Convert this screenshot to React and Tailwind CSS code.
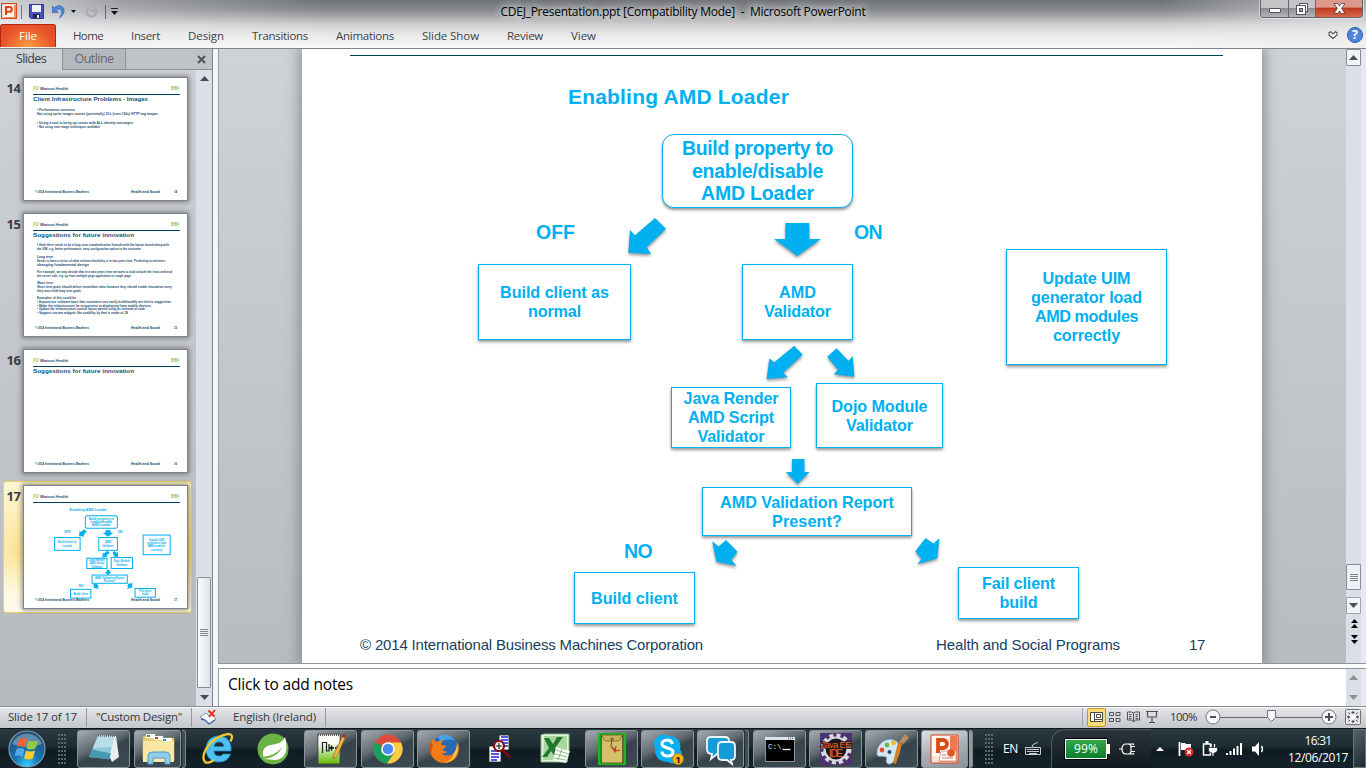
import React, { useLayoutEffect, useRef } from "react";

const BLUE = "#00b0f0";

/* Text run whose letter spacing is adjusted so that it fills w pixels. */
function Fit({ w, className = "", children }) {
  const ref = useRef(null);
  useLayoutEffect(() => {
    const el = ref.current;
    el.style.letterSpacing = "0px";
    const nat = el.getBoundingClientRect().width;
    const n = el.textContent.length;
    el.style.letterSpacing = (w - nat) / n + "px";
  }, [w]);
  return (
    <span ref={ref} className={"inline-block whitespace-nowrap " + className}>
      {children}
    </span>
  );
}

const ARROWS = [
  "655,218 666,228.7 646.7,247.3 651.3,254 628.3,252.7 630,230 635,235.3",
  "785.3,223 809.3,223 809.3,239 821,239 797.3,256 774,239 785.3,239",
  "794.2,345.7 802.8,354.7 783.2,372.7 788,377.3 766.6,379 769.4,358.3 774.2,362.3",
  "836.5,348.3 848.6,360.7 852.7,356 854.4,376.7 833.8,374.3 837.9,369.7 827.2,356.7",
  "792,459 804.4,459 804.4,472 809.6,472 797.6,484 785.8,472 792,472",
  "712.2,541.3 718.5,546.5 726,540 737.6,551.7 731.4,560 736.6,566 716.3,561.7",
  "925.6,538 933.5,543.5 939.4,538.3 937.3,558.3 917.3,564.3 921.5,559 915.3,551.3",
];

const NODES = [
  { x: 662, y: 134, w: 191, h: 75, r: 12, big: true, lines: [["Build property to", 151], ["enable/disable", 131], ["AMD Loader", 113]], pos: "left-[360px] top-[85px] w-[191px] h-[74px] rounded-[12px]" },
  { x: 478, y: 264, w: 153, h: 76, lines: [["Build client as", 109], ["normal", 53]], pos: "left-[176px] top-[215px] w-[153px] h-[76px]" },
  { x: 742, y: 264, w: 111, h: 76, lines: [["AMD", 37], ["Validator", 67]], pos: "left-[440px] top-[215px] w-[111px] h-[76px]" },
  { x: 1006, y: 249, w: 161, h: 117, lines: [["Update UIM", 88], ["generator load", 111], ["AMD modules", 103], ["correctly", 67]], pos: "left-[704px] top-[200px] w-[161px] h-[116px]" },
  { x: 671, y: 387, w: 120, h: 61, lines: [["Java Render", 95], ["AMD Script", 86], ["Validator", 67]], pos: "left-[369px] top-[338px] w-[120px] h-[61px]" },
  { x: 816, y: 383, w: 127, h: 65, lines: [["Dojo Module", 96], ["Validator", 67]], pos: "left-[514px] top-[334px] w-[127px] h-[65px]" },
  { x: 702, y: 487, w: 210, h: 49, lines: [["AMD Validation Report", 174], ["Present?", 70]], pos: "left-[400px] top-[438px] w-[210px] h-[49px]" },
  { x: 574, y: 572, w: 121, h: 52, lines: [["Build client", 87]], pos: "left-[272px] top-[523px] w-[121px] h-[52px]" },
  { x: 958, y: 567, w: 121, h: 52, lines: [["Fail client", 73], ["build", 38]], pos: "left-[656px] top-[518px] w-[121px] h-[52px]" },
];

function Slide() {
  return (
    <div className="relative h-[614px] w-[960px] shrink-0 overflow-hidden bg-white font-['Liberation_Sans',sans-serif] font-bold text-[#00b0f0] shadow-[0_0_12px_3px_rgba(90,95,102,0.55)]">
      <div className="absolute left-[48px] top-[6px] h-px w-[873px] bg-[#00405c]" />
      <div className="absolute left-[266px] top-[36px] text-[21px] leading-[24px]"><Fit w={221}>Enabling AMD Loader</Fit></div>
      <svg className="absolute left-0 top-0 h-[614px] w-[960px] drop-shadow-[0_2px_1.5px_rgba(0,0,0,0.4)]" viewBox="302 49 960 614">
        {ARROWS.map((p) => <polygon key={p} points={p} fill={BLUE} />)}
      </svg>
      {NODES.map((n) => (
        <div key={n.x + "-" + n.y} className={"absolute flex flex-col items-center justify-center border border-[#00b0f0] bg-white shadow-[0_2px_3px_rgba(0,0,0,0.42)] " + n.pos}>
          {n.lines.map(([t, w]) => (
            <div key={t} className={n.big ? "h-[22.5px] text-[19.5px] leading-[22.5px]" : "h-[19px] text-[16.2px] leading-[19px]"}>
              <Fit w={w}>{t}</Fit>
            </div>
          ))}
        </div>
      ))}
      <div className="absolute left-[234px] top-[172px] text-[19.5px] leading-[23px]"><Fit w={39}>OFF</Fit></div>
      <div className="absolute left-[552px] top-[172px] text-[19.5px] leading-[23px]"><Fit w={28}>ON</Fit></div>
      <div className="absolute left-[322px] top-[491px] text-[19.5px] leading-[23px]"><Fit w={28}>NO</Fit></div>
      <div className="absolute left-[58px] top-[587px] flex w-[845px] items-center text-[15px] font-normal leading-[18px] text-[#17405e]">
        <Fit w={343}>© 2014 International Business Machines Corporation</Fit>
        <Fit w={184} className="ml-[233px]">Health and Social Programs</Fit>
        <Fit w={16} className="ml-[69px]">17</Fit>
      </div>
    </div>
  );
}

const THUMB_TEXT = {
  14: { title: "Client Infrastructure Problems - Images", tw: 115, lines: [[14, 32, 38, "• Performance concerns"], [14, 36, 121, "Not using sprite images causes (potentially) 10's (even 100s) HTTP img images"], [14, 45, 96, "• Using a tool to bring up runner with ALL identity messages"], [14, 49, 63, "• Not using new image techniques available"]] },
  15: { title: "Suggestions for future innovation", tw: 101, lines: [
    [14, 31, 132, "I think there needs to be a long term standardisation formula with the layout based along with"], [14, 35, 104, "the UIM, e.g. better performance, easy configuration option to the customer"],
    [14, 43, 16, "Long term"], [14, 47, 128, "Needs to have a vision of what solution feasibility is in two years time. Predicting to minimise"], [14, 51, 52, "changing fundamental design"],
    [14, 58, 135, "For example, we may decide that in a two years time we want to look at both the front-end and"], [14, 62, 94, "the server side, e.g. go from multiple page application to single page"],
    [14, 69, 16, "Short term"], [14, 73, 135, "Short term goals should deliver immediate value because they should enable innovation every"], [14, 77, 44, "they must hold long term goals"],
    [14, 84, 39, "Examples of this could be"], [14, 88, 134, "•    Expand our software base that customers can easily build/modify are tied to suggestion"], [14, 91.700, 114, "•    Make the infrastructure be responsive to displaying from mobile devices"], [14, 95.300, 108, "•    Update the infrastructure control layout panels using as minimal of code"], [14, 99, 91, "•    Support custom widgets like usability by that is made of JS"]] },
  16: { title: "Suggestions for future innovation", tw: 101, lines: [] },
};

function Thumb({ n }) {
  const t = THUMB_TEXT[n];
  return (
    <div className="h-[124px] w-[165px] shrink-0 border border-[#808488] bg-white shadow-[0_0_5px_1px_rgba(70,74,80,0.65)]">
      <svg className="block h-[122px] w-[163px]" viewBox="0 0 163 122" fontFamily="Liberation Sans, sans-serif">
        <text x="9" y="11.8" fontSize="4.6" fontWeight="bold" fill="#b5dd8c" textLength="6">IBM</text>
        <text x="16" y="11.8" fontSize="4.4" fontWeight="bold" fill="#2a5070" textLength="28" lengthAdjust="spacingAndGlyphs">Watson Health</text>
        <text x="147" y="11.8" fontSize="5" fontWeight="bold" fill="#93cf7a" textLength="8">IBM</text>
        <rect x="9" y="16" width="147" height="1" fill="#003f5e" />
        {t && <text x="9" y="22.8" fontSize="6.2" fontWeight="bold" fill="#12547c" textLength={t.tw} lengthAdjust="spacingAndGlyphs">{t.title}</text>}
        {t && t.lines.map(([x, y, w, s], i) => (
          <text key={i} x={x - 1} y={y + 1} fontSize="3.2" fontWeight="bold" fill="#1b4d6e" textLength={w} lengthAdjust="spacingAndGlyphs">{s}</text>
        ))}
        {n === 17 && (
          <g transform="scale(0.168) translate(-297 43)" fontWeight="bold" fill={BLUE} textAnchor="middle">
            <text x="679" y="104" fontSize="22" textLength="221" lengthAdjust="spacingAndGlyphs">Enabling AMD Loader</text>
            {ARROWS.map((p) => <polygon key={p} points={p} stroke={BLUE} strokeWidth="6" />)}
            {NODES.map((b) => (
              <g key={b.x + "-" + b.y}>
                <rect x={b.x} y={b.y} width={b.w} height={b.h} rx={b.r || 0} fill="#fff" stroke={BLUE} strokeWidth="6" />
                {b.lines.map(([s, w], i) => (
                  <text key={s} x={b.x + b.w / 2} y={b.y + b.h / 2 + 6 + (i - (b.lines.length - 1) / 2) * 19} fontSize="17" textLength={w} lengthAdjust="spacingAndGlyphs">{s}</text>
                ))}
              </g>
            ))}
            <text x="555" y="239" fontSize="20">OFF</text>
            <text x="868" y="239" fontSize="20">ON</text>
            <text x="638" y="558" fontSize="20">NO</text>
          </g>
        )}
        <g fontSize="2.8" fontWeight="bold" fill="#0c4263">
          <text x="11" y="115.4" textLength="54" lengthAdjust="spacingAndGlyphs">© 2014 International Business Machines</text>
          <text x="107" y="115.4" textLength="29" lengthAdjust="spacingAndGlyphs">Health and Social</text>
          <text x="150" y="115.4">{n}</text>
        </g>
      </svg>
    </div>
  );
}

function ThumbRow({ n, selected }) {
  return (
    <div className="ml-[3px] flex h-[136px] w-[189px] shrink-0 items-start">
      <div className={"flex h-[132px] w-[189px] items-start rounded-[3px] border pt-[3px] " + (selected ? "border-[#f2cf5c] bg-[linear-gradient(90deg,#ffffff55,transparent_20%),linear-gradient(180deg,#fdf3c8,#fce391_35%,#fbdc78_55%,#fff6d6_85%,#fffbe9)]" : "border-transparent")}>
        <div className="w-[19px] shrink-0 pt-[2px] text-center font-['Noto_Sans',sans-serif] text-[13px] font-bold leading-[18px] text-[#3b3b3b]"><Fit w={14}>{n}</Fit></div>
        <Thumb n={n} />
      </div>
    </div>
  );
}

function Tri({ dir = "up", fill = "#4a4d51", className = "h-[5px] w-[9px]" }) {
  return (
    <svg className={"block shrink-0 " + className} viewBox="0 0 9 5" preserveAspectRatio="none">
      <path d={dir === "up" ? "M4.5 0L9 5H0z" : "M0 0H9L4.5 5z"} fill={fill} />
    </svg>
  );
}

function Grip() {
  return (
    <div className="flex w-[8px] flex-col gap-px">
      <div className="h-px bg-[#808890]" /><div className="h-px bg-[#808890]" /><div className="h-px bg-[#808890]" /><div className="h-px bg-[#808890]" />
    </div>
  );
}

function PptSmall() {
  return (
    <svg className="block h-[17px] w-[17px]" viewBox="0 0 17 17">
      <rect x=".5" y=".5" width="15" height="15" fill="#f6d5c8" stroke="#d14a22" />
      <path d="M9 2h6v13H3z" fill="#f08a5f" />
      <rect x="2" y="2" width="11" height="12" fill="#fff4ee" />
      <path d="M5 12V4h3.4a2.4 2.4 0 010 4.8H6" fill="none" stroke="#d8450f" strokeWidth="2.1" />
    </svg>
  );
}

function TitleBar() {
  return (
    <div className="flex h-[24px] items-start">
      <div className="flex h-[23px] w-[431px] items-center pl-px">
        <PptSmall />
        <div className="ml-[3px] h-[14px] w-px bg-[#70747a]" />
        <svg className="ml-[7px] h-[15px] w-[15px]" viewBox="0 0 15 15">
          <path d="M.5.5h14v14H2L.5 13z" fill="#4a52c0" stroke="#2f358c" />
          <path d="M3 1h9v7H3z" fill="#eef2fb" /><path d="M4 10h7v4H4z" fill="#20264f" /><path d="M8 11h2v3H8z" fill="#f2f4fa" />
        </svg>
        <svg className="ml-[8px] h-[14px] w-[13px]" viewBox="0 0 13 14">
          <path d="M0 1l2 1.800C5 0 9 0 11 2.500c2.500 3 1 8-4 10.500 2.500-3 3.500-6 1.800-8C7.500 3.500 5.500 4 4.500 5.200L6.500 7.500H0z" fill="#4b86d6" stroke="#2c62b4" strokeWidth=".6" />
        </svg>
        <Tri dir="down" fill="#111" className="ml-[6px] h-[3px] w-[5px]" />
        <svg className="ml-[9px] h-[13px] w-[13px]" viewBox="0 0 13 13"><path d="M3.500 2.500A5 5 0 109.500 2.500M5.500 5.500h4.500V1" fill="none" stroke="#a9acb0" strokeWidth="2.200" /></svg>
        <div className="ml-[7px] h-[14px] w-px bg-[#60646a]" />
        <div className="ml-[5px] flex flex-col items-center gap-[2px]"><div className="h-px w-[7px] bg-[#222]" /><Tri dir="down" fill="#111" className="h-[4px] w-[7px]" /></div>
      </div>
      <div className="flex w-[504px] justify-center pt-[3px] text-[12px] leading-[17px] text-black [text-shadow:0_0_8px_#fff,0_0_10px_#fff]">
        <Fit w={365}>CDEJ_Presentation.ppt [Compatibility Mode]&nbsp; -&nbsp; Microsoft PowerPoint</Fit>
      </div>
      <div className="ml-auto mr-[3px] flex h-[18px] w-[103px] overflow-hidden rounded-b-[4px] border border-t-0 border-[#5f6267] shadow-[0_0_0_1px_rgba(255,255,255,0.5)]">
        <div className="flex w-[28px] items-center justify-center border-r border-[#66696d] bg-[linear-gradient(#c4c5c7_45%,#8b8d91_50%,#b4b6b9)]"><div className="mt-[3px] h-[5px] w-[12px] rounded-[1px] border border-[#50545c] bg-white" /></div>
        <div className="flex w-[27px] items-center justify-center border-r border-[#66696d] bg-[linear-gradient(#c4c5c7_45%,#8b8d91_50%,#b4b6b9)]">
          <svg className="h-[12px] w-[12px]" viewBox="0 0 12 12"><rect x="3.500" y=".5" width="8" height="8" fill="#fff" stroke="#50545c" /><rect x=".5" y="2.500" width="9" height="9" fill="#fff" stroke="#50545c" /><rect x="3.500" y="5.500" width="3" height="3" fill="#9a9da2" stroke="#50545c" /></svg>
        </div>
        <div className="flex flex-1 items-center justify-center bg-[linear-gradient(#dd9a8c_40%,#c13a20_50%,#d9674a)]">
          <svg className="h-[11px] w-[13px]" viewBox="0 0 13 11"><path d="M1 .5h3.500l2 2.500 2-2.500H12L8.700 5.500 12 10.500H8.500l-2-2.500-2 2.500H1l3.300-5z" fill="#fff" stroke="#5c4048" strokeWidth=".9" /></svg>
        </div>
      </div>
    </div>
  );
}

const TABS = [["Home", 30], ["Insert", 29], ["Design", 36], ["Transitions", 56], ["Animations", 58], ["Slide Show", 57], ["Review", 36], ["View", 25]];

function Ribbon() {
  return (
    <div className="flex h-[24px] items-start text-[11.5px] leading-[15px] text-[#3f4145]">
      <div className="flex h-[23px] w-[56px] items-center justify-center rounded-t-[3px] border border-b-0 border-[#b3270f] bg-[radial-gradient(ellipse_at_50%_110%,#fba544,#e9542a_65%,#e04a25)] pb-px text-white">
        <Fit w={18}>File</Fit>
      </div>
      <div className="ml-[17px] flex gap-[28px] pt-[4px]">
        {TABS.map(([t, w]) => <Fit key={t} w={w}>{t}</Fit>)}
      </div>
      <div className="ml-auto mr-[3px] flex items-center gap-[9px] pt-[3px]">
        <svg className="h-[8px] w-[10px]" viewBox="0 0 10 8"><path d="M1 1.800L2.500.7 5 3 7.500.7 9 1.800V4L5 7.500 1 4z" fill="#fff" stroke="#454a52" strokeWidth="1.100" /></svg>
        <div className="flex h-[16px] w-[16px] items-center justify-center rounded-full border border-[#2a59a8] bg-[#4d86dc] text-[12.5px] font-bold leading-[14px] text-white">?</div>
      </div>
    </div>
  );
}

function SidePane() {
  return (
    <div className="flex w-[213px] shrink-0 flex-col border-r border-[#7d828b]">
      <div className="flex h-[21px] shrink-0 text-[12.5px] leading-[20px] text-[#3b3d40]">
        <div className="flex w-[62px] justify-center"><Fit w={30}>Slides</Fit></div>
        <div className="flex w-[64px] justify-center border-b border-l border-r border-[#8c9197] bg-[#b5b9be] text-[#63666a]"><Fit w={39}>Outline</Fit></div>
        <div className="flex flex-1 items-center justify-end border-b border-[#8c9197] bg-[#bfc3c8] pr-[6px] pt-px">
          <svg className="h-[9px] w-[9px]" viewBox="0 0 9 9"><path d="M1 1l7 7M8 1L1 8" stroke="#4e5155" strokeWidth="2" /></svg>
        </div>
      </div>
      <div className="flex min-h-0 flex-1">
        <div className="flex w-[196px] flex-col overflow-hidden pt-[3px]">
          <ThumbRow n={14} /><ThumbRow n={15} /><ThumbRow n={16} /><ThumbRow n={17} selected />
        </div>
        <div className="flex w-[16px] flex-col items-center bg-[#dbdfe7]">
          <div className="flex h-[17px] items-center"><Tri /></div>
          <div className="mt-[490px] flex h-[111px] w-[14px] items-center justify-center rounded-[1px] border border-[#868c9c] bg-[linear-gradient(90deg,#fafbfd,#dfe3ea)]"><Grip /></div>
          <div className="flex flex-1 items-center"><Tri dir="down" /></div>
        </div>
      </div>
    </div>
  );
}

function MainArea() {
  return (
    <div className="flex min-w-0 flex-1 flex-col">
      <div className="flex h-[614px] shrink-0">
        <div className="flex w-[1128px] overflow-hidden border-l border-[#9a9fa6] bg-[linear-gradient(#cfd2d6,#b8bbbf)] pl-[83px]">
          <Slide />
        </div>
        <div className="flex w-[15px] flex-col bg-[#dbdfe7]">
          <div className="flex h-[17px] w-[15px] items-center justify-center rounded-[1px] border border-[#868c96] bg-[#f2f4f7]"><Tri /></div>
          <div className="mt-[498px] flex h-[26px] w-[15px] items-center justify-center rounded-[1px] border border-[#868c9c] bg-[#eef0f5]"><Grip /></div>
          <div className="mt-[7px] flex h-[17px] w-[15px] items-center justify-center rounded-[1px] border border-[#a0a5ad] bg-[#f2f4f7]"><Tri dir="down" /></div>
          <div className="mt-[5px] flex flex-col items-center gap-px pl-px"><Tri fill="#000" className="h-[4px] w-[7px]" /><Tri fill="#000" className="h-[4px] w-[7px]" /></div>
          <div className="mt-[7px] flex flex-col items-center gap-px pl-px"><Tri dir="down" fill="#000" className="h-[4px] w-[7px]" /><Tri dir="down" fill="#000" className="h-[4px] w-[7px]" /></div>
        </div>
        <div className="flex-1 bg-[#e6e9ef]" />
      </div>
      <div className="h-[6px] shrink-0 border-b border-t border-[#8f949d] bg-white" />
      <div className="flex min-h-0 flex-1">
        <div className="flex w-[1128px] border-l border-[#9a9fa6] bg-white pl-[9px] pt-[5px] text-[15.5px] leading-[20px] text-black"><Fit w={125}>Click to add notes</Fit></div>
        <div className="flex w-[15px] flex-col items-center justify-between bg-[#dbdfe7] py-[6px]"><Tri fill="#87938f" /><Tri dir="down" fill="#87938f" /></div>
        <div className="flex-1 bg-[#e6e9ef]" />
      </div>
    </div>
  );
}

function StatusBar() {
  return (
    <div className="flex h-[22px] shrink-0 items-center border-t border-[#838991] bg-[linear-gradient(#e4e6ea,#c3c7cc)] pb-px text-[11.5px] leading-[16px] text-[#33363a] shadow-[inset_0_1px_0_#fff]">
      <Fit w={69} className="ml-[8px]">Slide 17 of 17</Fit>
      <div className="ml-[9px] h-[19px] w-px bg-[#92979e]" />
      <Fit w={86} className="ml-[9px]">"Custom Design"</Fit>
      <div className="ml-[9px] h-[19px] w-px bg-[#92979e]" />
      <svg className="ml-[8px] h-[16px] w-[17px]" viewBox="0 0 17 16">
        <path d="M0 8l6-4 3 3 3-1 4 4-7 5-4-4z" fill="#f7f9fc" stroke="#6680a8" strokeWidth=".8" /><path d="M1 10l4 1 4 4 6-4" fill="none" stroke="#3a62ac" strokeWidth="1.300" /><path d="M8.500 1.500l6 6M15 1l-6 7" stroke="#e8301c" strokeWidth="1.900" />
      </svg>
      <Fit w={83} className="ml-[16px]">English (Ireland)</Fit>
      <div className="ml-[9px] h-[19px] w-px bg-[#92979e]" />
      <div className="ml-auto flex items-center">
        <div className="h-[19px] w-px bg-[#a0a5ab]" />
        <div className="ml-[4px] flex h-[19px] w-[19px] items-center justify-center rounded-[2px] border border-[#c7962e] bg-[#fddc75]">
          <svg className="h-[10px] w-[13px]" viewBox="0 0 13 10"><path d="M.5.5h12v9H.5zM4.500.5v9" fill="#fffdf4" stroke="#4c4a44" /><path d="M6.500 2.500h4v3h-4zM5 7.500h7" fill="none" stroke="#4c4a44" /></svg>
        </div>
        <svg className="ml-[3px] h-[11px] w-[12px]" viewBox="0 0 12 11" fill="none" stroke="#505357"><path d="M.5.500h4v3h-4zM7 .5h4v3H7zM.5 6.500h4v3h-4zM7 6.500h4v3H7z" /></svg>
        <svg className="ml-[6px] h-[12px] w-[13px]" viewBox="0 0 13 12" fill="none" stroke="#505357"><path d="M.5 1h4L6.500 2 8.500 1h4v8h-4L6.500 11 4.500 9h-4zM6.500 2v9M2 3.500h2.500M2 5.500h2.500M2 7.500h2.500M8.500 3.500H11M8.500 5.500H11M8.500 7.500H11" /></svg>
        <svg className="ml-[6px] h-[12px] w-[12px]" viewBox="0 0 12 12" fill="none" stroke="#505357"><path d="M0 .500h12M1.500.5v5.500h9V.5M6 6v5M3 11.500h6" strokeWidth="1.200" /></svg>
        <Fit w={27} className="ml-[12px]">100%</Fit>
        <div className="ml-[8px] flex items-center">
          <svg className="h-[16px] w-[132px]" viewBox="0 0 132 16"><path d="M15 8.500h102" stroke="#666a6f" /><circle cx="8" cy="8" r="7" fill="#f5f6f8" stroke="#75797e" /><path d="M5 8h6" stroke="#4b4e52" strokeWidth="2" /><circle cx="124" cy="8" r="7" fill="#f5f6f8" stroke="#75797e" /><path d="M120 8h8M124 4v8" stroke="#4b4e52" strokeWidth="2" /><path d="M62.500 1.500h8v7l-4 4-4-4z" fill="#f8f9fa" stroke="#6a6e73" /></svg>
        </div>
        <svg className="ml-[8px] mr-[5px] h-[16px] w-[16px]" viewBox="0 0 16 16"><rect x=".5" y=".5" width="15" height="15" rx="1" fill="#e4e6e8" stroke="#6f7378" /><path d="M8 2v3M8 11v3M2 8h3M11 8h3M3.500 3.500l1.500 1.500M12.500 3.500L11 5M3.500 12.500L5 11M12.500 12.500L11 11M6.500 3.500h3M6.500 12.500h3M3.500 6.500v3M12.500 6.500v3" stroke="#45484c" strokeWidth="1" /><path d="M6 6h4v4H6z" fill="#fff" /></svg>
      </div>
    </div>
  );
}

/* ---- taskbar icons ---- */
const Ico = ({ children }) => <svg className="block h-[36px] w-[36px] shrink-0" viewBox="0 0 36 36">{children}</svg>;

const Notepad = () => (
  <Ico><path d="M13 4l17 1 3 21-7 5z" fill="#e9eef1" /><path d="M12 5l16 1-5 22L3 26z" fill="#8fc7d6" /><path d="M12 5l16 1-2 10L7 17z" fill="#b8dfe7" /><path d="M12 4.500l17 .5" stroke="#60686c" strokeWidth="2" strokeDasharray="1 1" /><path d="M3 26l20 2.500 2-6-19-4z" fill="#4898b0" /></Ico>
);
const Explorer = () => (
  <Ico><path d="M3 5h12l2 2h17v22H3z" fill="#e9cf74" stroke="#c9a850" strokeWidth=".7" /><rect x="6" y="3" width="9" height="4" fill="#fff" /><path d="M7 5h3" stroke="#2fa84a" strokeWidth="2" /><rect x="14" y="5" width="9" height="4" fill="#fff" /><path d="M15 7h3" stroke="#d33a2a" strokeWidth="2" /><rect x="22" y="7" width="10" height="4" fill="#fff" /><path d="M23 9h3" stroke="#2f8fd6" strokeWidth="2" /><path d="M3 10h31v21H3z" fill="#f8e7a5" /><path d="M8 33V25q0-4 4-4h14q4 0 4 4v8h-5v-6H13v6z" fill="#90cde9" stroke="#4f9ecb" /></Ico>
);
const IE = () => (
  <Ico><path d="M19 5C11 5 6 10 6 18.500 6 26 11 31 19 31c6 0 10-3 11.500-8H23c-1 1.500-2 2-4 2-3 0-5-2-5-5h17C32 11 27 5 19 5zm-5 10.500c.5-3 2-4.500 5-4.500s4.500 1.500 5 4.500z" fill="#4fc0ef" stroke="#1c86c7" strokeWidth=".8" /><path d="M5 31C0 25 8 12 17 7 24 3 32 1 32 6c0 1-.5 2.500-1.500 4.500M5 31c2 1.500 6 0 9-2" fill="none" stroke="#f5c928" strokeWidth="2.300" /></Ico>
);
const Spring = () => (
  <Ico><circle cx="17" cy="18" r="15.500" fill="#6bb345" /><path d="M29 6c2 7 4 22-10 23-3 0-7-1-11-1-3-8 0-13 7-14 6-1 11-2 14-8z" fill="#fff" /><path d="M6 28c10 0 17-5 21-13-6 8-13 10-21 11z" fill="#6bb345" /></Ico>
);
const NotepadPP = () => (
  <Ico><defs><linearGradient id="npp" x1="0" y1="0" x2="0" y2="1"><stop offset=".3" stopColor="#fafdf6" /><stop offset="1" stopColor="#62b800" /></linearGradient></defs><path d="M5 3h22v30H5z" fill="url(#npp)" stroke="#445" strokeWidth=".8" /><path d="M5 4h22" stroke="#555" strokeWidth="2" strokeDasharray="1 1" /><path d="M9.500 22V11.500h4V20h2.500V13" fill="none" stroke="#222" strokeWidth="1.200" /><path d="M16 17h5M18.500 14.500v5M22 17h5M24.500 14.500v5" stroke="#111" strokeWidth="1.400" /><path d="M30 4l3 1-9 20-4 3 1-5z" fill="#f5b63c" stroke="#9a6320" strokeWidth=".7" /><path d="M30 3l3 1-1 3-3-1z" fill="#9b3034" /></Ico>
);
const Chrome = () => (
  <Ico><circle cx="18" cy="18" r="14.500" fill="#dd4b3e" /><path d="M5.200 11.200A14.500 14.500 0 0017 32.500l7-11L18 18z" fill="#1a9f5c" /><path d="M18 11.500h13A14.500 14.500 0 0117 32.500l7.500-11z" fill="#fbcd42" /><circle cx="18" cy="18" r="6.800" fill="#fff" /><circle cx="18" cy="18" r="5.300" fill="#4c8bf5" /></Ico>
);
const Firefox = () => (
  <Ico><circle cx="19" cy="17" r="13" fill="#2769b5" /><path d="M12 6c5-4 14-3 17 4-4-2-10-2-14 1z" fill="#45a5e4" /><path d="M6 8c-5 9-2 23 12 24 13 0 17-12 14-20-.5 5-2 10-7 12-3 1-8 1-9-2 2 1 4 0 5-1-1-1-3-1-5-2l4-3c0-2-3-2-5-2 0-2 1-3 2-4-3-1-5 0-6 1z" fill="#f27a1a" /><path d="M31 11c3 10-2 20-13 21 8-3 9-6 10-10 2-3 3-6 3-11z" fill="#fcc93b" /><path d="M6 9c-1 2 0 4 1 6-3 5-2 10 1 13-6-5-6-13-2-19z" fill="#d94b12" /></Ico>
);
const DocSearch = () => (
  <Ico><path d="M17 4h10v15H17zM7 15h12v16H7z" fill="#fff" stroke="#222" strokeWidth=".8" /><path d="M19 6h7M19 9h7M19 12h7M19 15h7M9 20h8M9 23h8M9 26h8M9 29h6" stroke="#1c22dc" strokeWidth="1.400" /><circle cx="17" cy="15" r="5" fill="#f5f5f5" stroke="#7d0c0c" strokeWidth="2.200" /><path d="M21 19l7 7" stroke="#7d0c0c" strokeWidth="2.600" /><path d="M14 15h6M17 12v6" stroke="#222" strokeWidth="1.200" /></Ico>
);
const Excel = () => (
  <Ico><path d="M3 4l3-1h25v16l-2 12H3z" fill="#e6f3e2" stroke="#7dba78" /><path d="M6 5h23v24H5z" fill="#a9d69f" /><path d="M6 7h5l4 6 4-7h6l-8 11 6 9h-6l-4-6-4 6H4l7-9z" fill="#22782c" /><path d="M18 16l14 4-4 12-13-3z" fill="#f9fcf8" /><path d="M18 19l13 4M17 23l12 3M16 27l12 2M24 18l-4 11" stroke="#8fbd89" /></Ico>
);
const Envelope = () => (
  <Ico><rect x="4" y="2" width="28" height="32" fill="#159b19" /><rect x="5" y="3" width="26" height="30" fill="none" stroke="#24d428" /><rect x="7.500" y="4" width="21" height="28" fill="#d4c06b" stroke="#6a5a26" /><path d="M8 5l3 5h14l3-5" fill="#c7b25c" stroke="#75662d" strokeWidth=".8" /><circle cx="18" cy="8" r="1.500" fill="#a04a2a" /><path d="M18 9l-1 6 4 6 1-6M17 16l6 4 3-1" fill="none" stroke="#d22a1f" strokeWidth="1.100" /></Ico>
);
const Skype = () => (
  <Ico><path d="M12 4a9 9 0 017 1c8 0 13 6 11 13a9 9 0 01-12 13C9 31 4 25 5 17 2 10 6 5 12 4z" fill="#08aff0" /><path d="M22.500 13c-1-3-3-4-5-4-3.500 0-5.500 2-5.500 4 0 5 11 3 11 8 0 3-3 4-5.500 4-3.500 0-5.500-2-5.500-4.500" fill="none" stroke="#fff" strokeWidth="3.200" /><circle cx="28" cy="28" r="5.500" fill="#fcb116" stroke="#b97806" strokeWidth=".7" /><text x="28" y="31.500" fontSize="9" fontWeight="bold" textAnchor="middle" fill="#111">1</text></Ico>
);
const Chat = () => (
  <Ico><path d="M8 6h14q4 0 4 4v9q0 4-4 4h-8l-6 5 1-5q-5 0-5-5V10q0-4 4-4z" fill="#159cd8" stroke="#eef5f8" strokeWidth="1.800" /><path d="M19 11h9q4 0 4 4v10q0 4-4 4l1 4-5-4h-5q-4 0-4-4V15q0-4 4-4z" fill="#159cd8" stroke="#eef5f8" strokeWidth="1.800" /></Ico>
);
const Cmd = () => (
  <Ico><rect x="3.500" y="6.500" width="29" height="24" fill="#000" stroke="#8d9296" /><path d="M3 6h30v3H3z" fill="#dfe4ea" /><path d="M26 7.500h6" stroke="#587ca8" strokeWidth="1.500" strokeDasharray="1 1" /><text x="6" y="17.500" fontSize="7.500" fontFamily="Liberation Mono, monospace" fill="#eee">C:\</text><path d="M20.500 18.500h8" stroke="#eee" strokeWidth="1.300" /></Ico>
);
const JavaEE = () => (
  <Ico><rect x="2" y="2" width="32" height="32" fill="#4c326f" /><circle cx="18" cy="18" r="13.500" fill="none" stroke="#d8d8db" strokeWidth="4" strokeDasharray="4 3.070" /><circle cx="18" cy="18" r="11.500" fill="#191720" stroke="#d8d8db" strokeWidth="2.200" /><text x="18" y="17" fontSize="9.500" fontFamily="Liberation Sans, sans-serif" textAnchor="middle" fill="#ff6a1a" stroke="#191720" strokeWidth="1.600" paintOrder="stroke" textLength="31">Java EE</text><text x="18" y="26" fontSize="10" fontFamily="Liberation Sans, sans-serif" textAnchor="middle" fill="#ff6a1a" textLength="14">IDE</text></Ico>
);
const Paint = () => (
  <Ico><path d="M3 23C3 13 11 7 19 9s8 10 5 16-9 10-11 7 1-4-1-6-9 1-9-3z" fill="#d3e8f5" stroke="#8ab6d3" /><circle cx="8" cy="19" r="2.400" fill="#e64a38" /><circle cx="13" cy="14" r="2.400" fill="#6db33f" /><circle cx="19.500" cy="12" r="2.400" fill="#f0b92e" /><circle cx="15.500" cy="21" r="2" fill="#264a6d" /><path d="M24 11l4 2-6 20-3-1z" fill="#d97d27" /><path d="M31 3l4 4-6 6-4-2z" fill="#b98f5e" /></Ico>
);
const Ppt = () => (
  <Ico><path d="M4 4h27v28H4z" fill="#fbe2d8" stroke="#d04a20" /><path d="M20 5h10v26H12z" fill="#ee7b50" /><path d="M5 5h18v20H5z" fill="#fff7f3" /><path d="M11 22V9h5a4 4 0 010 8h-4" fill="none" stroke="#dc4a14" strokeWidth="3.800" /><path d="M14 20h15v10H12z" fill="#fff" stroke="#d9a28e" /><circle cx="24" cy="22" r="3.800" fill="#e4572a" /><path d="M15 24h4M15 27h11" stroke="#d87855" /></Ico>
);

const TASKS = [
  { I: Notepad, w: "w-[57px]", on: true }, { I: Explorer, w: "w-[57px]", on: true, stack: true }, { I: IE, w: "w-[56px]" }, { I: Spring, w: "w-[57px]" },
  { I: NotepadPP, w: "w-[57px]", on: true }, { I: Chrome, w: "w-[56px]", on: true }, { I: Firefox, w: "w-[56px]", on: true }, { I: DocSearch, w: "w-[56px]" }, { I: Excel, w: "w-[56px]" },
  { I: Envelope, w: "w-[56px]", on: true }, { I: Skype, w: "w-[56px]", on: true }, { I: Chat, w: "w-[56px]", on: true, stack: true }, { I: Cmd, w: "w-[56px]", on: true },
  { I: JavaEE, w: "w-[56px]", on: true }, { I: Paint, w: "w-[56px]", on: true }, { I: Ppt, w: "w-[56px]", on: true, stack: true, lit: true },
];

function DotGrip() {
  return <div className="h-[30px] w-[9px] shrink-0 bg-[radial-gradient(circle_at_1px_1px,#5d686d_0.8px,transparent_1px)] bg-[length:3px_4px]" />;
}

function Taskbar() {
  return (
    <div className="flex h-[40px] shrink-0 items-center border-t border-[#10151a] bg-[linear-gradient(180deg,#2b3a42,#1d2b32_45%,#101c22_55%,#14232b)] text-white">
      <svg className="ml-[8px] h-[38px] w-[38px] shrink-0" viewBox="0 0 38 38">
        <defs><radialGradient id="orb" cx=".5" cy=".95" r=".9"><stop offset="0" stopColor="#35d0ff" /><stop offset=".4" stopColor="#1673b4" /><stop offset="1" stopColor="#245075" /></radialGradient></defs>
        <circle cx="19" cy="19" r="18" fill="url(#orb)" stroke="#7b98ac" strokeWidth="1.200" /><path d="M4 14a16 16 0 0130 0q-15 6-30 0z" fill="#fff" opacity=".3" />
        <path d="M11 9q4.500-2 8 .5l-2 8q-4-2.500-8-.5z" fill="#ef6332" /><path d="M20.500 10.500q4.500 2 9.500 0l-2.500 8q-4.500 2-9 0z" fill="#94c944" /><path d="M8.500 19q4-2 8 .5L14.500 27q-4-2.500-8-.5z" fill="#53a8e8" /><path d="M18 20.500q4.500 2 9 0L25 28.500q-4.500 2-9 0z" fill="#fdc935" />
      </svg>
      <div className="ml-[12px] mr-[9px]"><DotGrip /></div>
      <div className="ml-px flex items-center">
        {TASKS.map(({ I, w, on, stack, lit }, i) => (
          <div key={i} className={"flex h-[38px] shrink-0 " + w}>
            <div className={"flex h-[38px] items-center justify-center border " + (stack ? "w-[47px] " : "w-[53px] ") + (on ? "rounded-[3px] border-[#8a9499] " + (lit ? "bg-[linear-gradient(160deg,#dfe2e4,#a9b0b4_50%,#8b9498)]" : "bg-[linear-gradient(155deg,#a7adb2,#5e686e_42%,#37434a_55%,#3f4b52)]") : "border-transparent")}>
              <I />
            </div>
            {stack && <div className={"ml-px h-[38px] w-[4px] rounded-r-[3px] border border-l-0 border-[#7b868b] " + (lit ? "bg-[#909a9f]" : "bg-[#3f4a51]")} />}
          </div>
        ))}
      </div>
      <div className="ml-[8px]"><DotGrip /></div>
      <div className="ml-[9px] w-[15px] shrink-0 text-[12px] leading-[16px]"><Fit w={15}>EN</Fit></div>
      <svg className="ml-[7px] h-[15px] w-[16px] shrink-0" viewBox="0 0 16 15" fill="none" stroke="#c9cdcf"><path d="M.5 6.500h15v7H.5zM8 6q-2-2 1-3t4-2M2 8.500h12M2 10.500h12M4 12.500h8" /></svg>
      <div className="ml-[10px] flex h-[39px] w-[100px] shrink-0 items-center rounded-tl-[14px] border-l border-t border-[#505a60] bg-[linear-gradient(#2a343a,#111a1f)]">
        <div className="ml-[13px] flex h-[20px] w-[42px] shrink-0 items-center justify-center border border-white bg-[linear-gradient(#31a84b,#0d7d2b)] text-[12px] outline-1 outline-black"><Fit w={24}>99%</Fit></div>
        <div className="h-[10px] w-[3px] bg-white" />
        <svg className="ml-[9px] h-[14px] w-[17px]" viewBox="0 0 17 14" fill="none" stroke="#fff"><path d="M0 7h3M9 2H7q-4 0-4 5t4 5h2q3 0 3-2.500v-5Q12 2 9 2zM12 4.500h4M12 9.500h4M9.500 2h5v1M9.500 12h5v-1" strokeWidth="1.200" /></svg>
      </div>
      <Tri fill="#fff" className="ml-[5px] h-[4px] w-[8px]" />
      <svg className="ml-[14px] h-[16px] w-[16px] shrink-0" viewBox="0 0 16 16"><path d="M1.500 1v14" stroke="#fff" strokeWidth="1.800" /><path d="M3 2h4l1 1h5v7H8L7 9H3z" fill="#fff" /><circle cx="11" cy="11" r="4.500" fill="#dd2826" /><path d="M9 9l4 4M13 9l-4 4" stroke="#fff" strokeWidth="1.300" /></svg>
      <svg className="ml-[8px] h-[16px] w-[16px] shrink-0" viewBox="0 0 16 16"><path d="M1.500 3h7v11h-7z" fill="none" stroke="#fff" strokeWidth="1.500" /><path d="M3.500 0h3v3h-3z" fill="#fff" /><path d="M9 3v4M12.500 3v4" stroke="#fff" strokeWidth="1.300" /><path d="M6.500 6.500h9V9q0 2.500-3.500 3v3h-2v-3q-3.500-.5-3.500-3z" fill="#fff" stroke="#182329" strokeWidth=".7" /></svg>
      <svg className="ml-[8px] h-[12px] w-[16px] shrink-0" viewBox="0 0 16 12" fill="#fff"><path d="M0 10h2v2H0zM3.500 8h2v4h-2zM7 5.500h2V12H7zM10.500 3h2v9h-2zM14 0h2v12h-2z" /></svg>
      <svg className="ml-[10px] h-[14px] w-[13px] shrink-0" viewBox="0 0 13 14"><path d="M0 4.500h3L7 0v14L3 9.500H0z" fill="#fff" /><path d="M9.500 4q2 3 0 6" fill="none" stroke="#fff" strokeWidth="1.400" /></svg>
      <div className="ml-[23px] flex w-[60px] shrink-0 flex-col items-center text-[12px] leading-[17px]"><Fit w={27}>16:31</Fit><Fit w={60}>12/06/2017</Fit></div>
      <div className="ml-auto h-[39px] w-[13px] shrink-0 border border-[#6b767c] bg-[linear-gradient(135deg,#56626a,#1d2a31)]" />
    </div>
  );
}

export default function App() {
  return (
    <div className="flex h-[768px] w-[1366px] flex-col overflow-hidden font-['Open_Sans',sans-serif]">
      <div className="h-[49px] shrink-0 border-b border-[#7b8690] bg-[linear-gradient(90deg,rgba(240,241,242,0.75),rgba(240,241,242,0.35)_9%,transparent_24%,transparent_85%,rgba(235,235,236,0.5)_96%),linear-gradient(180deg,#6f7376,#85888b_20%,#a9abad_36%,#d0d1d2_52%,#e8e8e9_72%,#f9f9f9)]">
        <TitleBar />
        <Ribbon />
      </div>
      <div className="flex h-[657px] shrink-0 bg-[linear-gradient(#cfd2d6,#b6b9bd)]">
        <SidePane />
        <div className="w-[5px] shrink-0 bg-[#f4f5f7]" />
        <MainArea />
      </div>
      <StatusBar />
      <Taskbar />
    </div>
  );
}
